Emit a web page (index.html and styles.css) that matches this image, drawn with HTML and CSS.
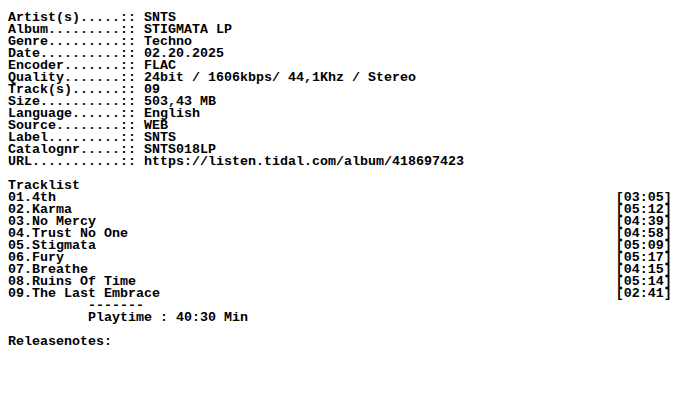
FILE: index.html
```html
<!DOCTYPE html>
<html>
<head>
<meta charset="utf-8">
<link rel="stylesheet" href="styles.css">
</head>
<body>
<div class="nfo">
<pre class="block">Artist(s).....:: SNTS
Album.........:: STIGMATA LP
Genre.........:: Techno
Date..........:: 02.20.2025
Encoder.......:: FLAC
Quality.......:: 24bit / 1606kbps/ 44,1Khz / Stereo
Track(s)......:: 09
Size..........:: 503,43 MB
Language......:: English
Source........:: WEB
Label.........:: SNTS
Catalognr.....:: SNTS018LP
URL...........:: https://listen.tidal.com/album/418697423

Tracklist</pre>
<div class="tracks">
<div class="track"><span>01.4th</span><span>[03:05]</span></div>
<div class="track"><span>02.Karma</span><span>[05:12]</span></div>
<div class="track"><span>03.No Mercy</span><span>[04:39]</span></div>
<div class="track"><span>04.Trust No One</span><span>[04:58]</span></div>
<div class="track"><span>05.Stigmata</span><span>[05:09]</span></div>
<div class="track"><span>06.Fury</span><span>[05:17]</span></div>
<div class="track"><span>07.Breathe</span><span>[04:15]</span></div>
<div class="track"><span>08.Ruins Of Time</span><span>[05:14]</span></div>
<div class="track"><span>09.The Last Embrace</span><span>[02:41]</span></div>
</div>
<pre class="block">          -------
          Playtime : 40:30 Min

Releasenotes:</pre>
</div>
</body>
</html>
```
FILE: styles.css
```css
html, body {
  margin: 0;
  padding: 0;
  background: #ffffff;
}
.nfo {
  padding: 12px 8px 0 8px;
  font-family: "Liberation Mono", "DejaVu Sans Mono", monospace;
  font-weight: bold;
  font-size: 13.33px;
  line-height: 12px;
  color: #000000;
}
.block {
  margin: 0;
  font: inherit;
  line-height: 12px;
  white-space: pre;
}
.tracks {
  width: 83ch;
}
.track {
  display: flex;
  justify-content: space-between;
  height: 12px;
  white-space: pre;
}
```
